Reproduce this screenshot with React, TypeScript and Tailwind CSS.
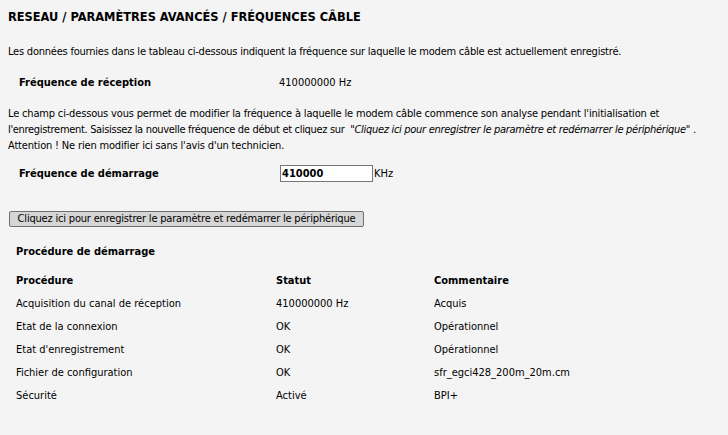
import React from "react";

const rows = [
  ["Acquisition du canal de réception", "410000000 Hz", "Acquis"],
  ["Etat de la connexion", "OK", "Opérationnel"],
  ["Etat d'enregistrement", "OK", "Opérationnel"],
  ["Fichier de configuration", "OK", "sfr_egci428_200m_20m.cm"],
  ["Sécurité", "Activé", "BPI+"],
];

const ff = { fontFamily: "Tahoma, 'DejaVu Sans Condensed', 'DejaVu Sans', sans-serif" };

export default function App() {
  return (
    <div
      className="w-[728px] h-[435px] bg-[#f4f4f4] text-black text-[11px] leading-4 overflow-hidden"
      style={ff}
    >
      <div className="px-2 pt-[9px]">
        <h1 className="text-[12.7px] font-bold leading-4">RESEAU / PARAMÈTRES AVANCÉS / FRÉQUENCES CÂBLE</h1>
        <p className="mt-[19px] tracking-[-0.22px] whitespace-nowrap">
          Les données fournies dans le tableau ci-dessous indiquent la fréquence sur laquelle le modem câble est actuellement enregistré.
        </p>
        <div className="mt-[15px] flex">
          <div className="w-[271px] pl-[11px] font-bold">Fréquence de réception</div>
          <div>410000000 Hz</div>
        </div>
        <p className="mt-[15px] tracking-[-0.17px] whitespace-nowrap">
          Le champ ci-dessous vous permet de modifier la fréquence à laquelle le modem câble commence son analyse pendant l'initialisation et
          <br />
          <span className="tracking-[-0.32px]">l'enregistrement. Saisissez la nouvelle fréquence de début et cliquez sur </span>
          <span className="italic tracking-[-0.3px]">&nbsp;"Cliquez ici pour enregistrer le paramètre et redémarrer le périphérique"</span> .
          <br />
          Attention ! Ne rien modifier ici sans l'avis d'un technicien.
        </p>
        <div className="mt-[11px] flex items-center h-[17px]">
          <div className="w-[272px] pl-[11px] font-bold">Fréquence de démarrage</div>
          <input
            defaultValue="410000"
            className="w-[93px] h-[17px] border border-[#777] bg-white px-[1px] font-bold text-[11px] outline-none"
            style={ff}
          />
          <span className="ml-[1px]">KHz</span>
        </div>
        <button
          className="mt-[29px] ml-[1px] w-[355px] h-[16px] border border-[#6f6f6f] rounded-[2px] bg-[#d6d6d6] text-[11px] leading-[14px] text-black tracking-[-0.19px] whitespace-nowrap"
          style={ff}
        >
          Cliquez ici pour enregistrer le paramètre et redémarrer le périphérique
        </button>
        <div className="mt-[17px] pl-[8px] font-bold">Procédure de démarrage</div>
        <div className="mt-[9px] pl-[8px]">
          <div className="flex h-[23px] items-center font-bold">
            <div className="w-[260px]">Procédure</div>
            <div className="w-[158px]">Statut</div>
            <div>Commentaire</div>
          </div>
          {rows.map((r) => (
            <div key={r[0]} className="flex h-[23px] items-center">
              <div className="w-[260px]">{r[0]}</div>
              <div className="w-[158px]">{r[1]}</div>
              <div>{r[2]}</div>
            </div>
          ))}
        </div>
      </div>
    </div>
  );
}
